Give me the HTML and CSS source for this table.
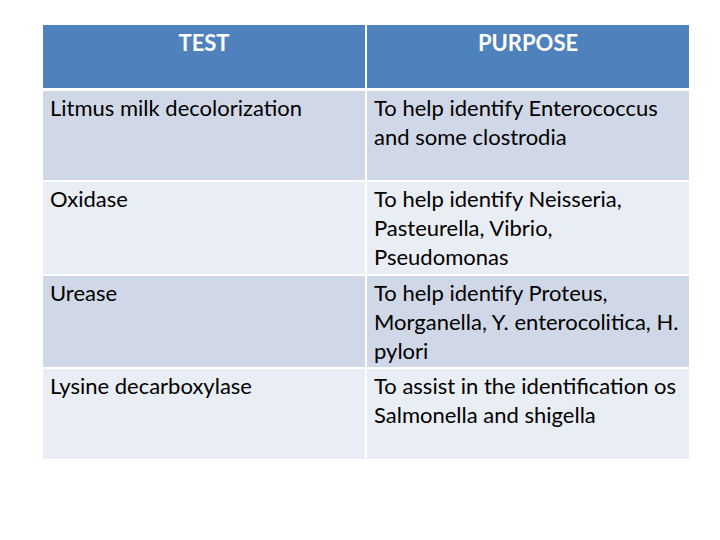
FILE: index.html
```html
<!DOCTYPE html>
<html>
<head>
<meta charset="utf-8">
<link rel="stylesheet" href="styles.css">
</head>
<body>
<div class="page">
  <div class="grid">
    <div class="cell head">TEST</div>
    <div class="cell head">PURPOSE</div>

    <div class="cell odd">Litmus milk decolorization</div>
    <div class="cell odd">To help identify Enterococcus and some clostrodia</div>

    <div class="cell even">Oxidase</div>
    <div class="cell even">To help identify Neisseria, Pasteurella, Vibrio, Pseudomonas</div>

    <div class="cell odd">Urease</div>
    <div class="cell odd">To help identify Proteus, Morganella, Y. enterocolitica, H. pylori</div>

    <div class="cell even">Lysine decarboxylase</div>
    <div class="cell even">To assist in the identification os Salmonella and shigella</div>
  </div>
</div>
</body>
</html>
```

FILE: styles.css
```css
html, body {
  margin: 0;
  padding: 0;
  background: #ffffff;
}

.page {
  width: 720px;
  height: 540px;
  padding: 25px 0 0 43px;
  box-sizing: border-box;
}

.grid {
  display: grid;
  width: 646px;
  grid-template-columns: 322px 322px;
  grid-template-rows: 64px 89px 92px 91px 90px;
  column-gap: 2px;
  row-gap: 2px;
  font-family: Lato, "Liberation Sans", sans-serif;
  font-size: 22px;
  line-height: 29px;
  color: #000000;
}

.cell {
  padding: 2px 2px 0 7px;
}

.head {
  background: #4f81bd;
  color: #ffffff;
  font-weight: bold;
  text-align: center;
  margin-bottom: 1px;
  padding: 3px 0 0 0;
}

.odd {
  background: #d0d8e8;
}

.even {
  background: #e9edf4;
}
```
